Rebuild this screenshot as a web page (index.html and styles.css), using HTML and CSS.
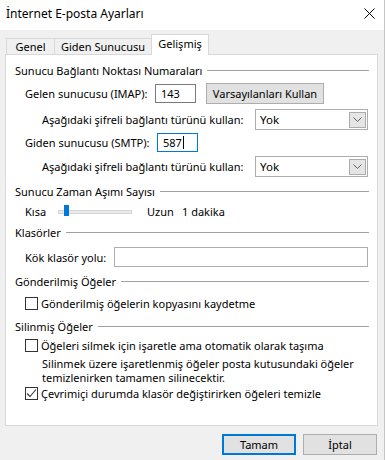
FILE: index.html
```html
<!DOCTYPE html>
<html lang="tr">
<head>
<meta charset="utf-8">
<title>İnternet E-posta Ayarları</title>
<link rel="stylesheet" href="styles.css">
</head>
<body>
<div class="window">
  <div class="titlebar">
    <span class="title">İnternet E-posta Ayarları</span>
    <svg class="close" width="11" height="11" viewBox="0 0 11 11"><path d="M0.5 0.5 L10.5 10.5 M10.5 0.5 L0.5 10.5" stroke="#000" stroke-width="1" fill="none"/></svg>
  </div>
  <div class="tabs">
    <div class="tab t-genel">Genel</div>
    <div class="tab t-giden">Giden Sunucusu</div>
    <div class="tab t-active">Gelişmiş</div>
  </div>
  <div class="panel">
    <div class="group-h g1"><span>Sunucu Bağlantı Noktası Numaraları</span><i class="rule"></i></div>
    <div class="row r-imap">
      <span class="lbl lbl-port">Gelen sunucusu (IMAP):</span>
      <div class="field num dark">143</div>
      <div class="btn btn-default">Varsayılanları Kullan</div>
    </div>
    <div class="row r-sel1">
      <span class="lbl lbl-enc">Aşağıdaki şifreli bağlantı türünü kullan:</span>
      <div class="select"><span>Yok</span><span class="arrow"><svg width="9" height="5" viewBox="0 0 9 5"><path d="M0.5 0.5 L4.5 4.5 L8.5 0.5" stroke="#606060" stroke-width="1" fill="none"/></svg></span></div>
    </div>
    <div class="row r-smtp">
      <span class="lbl lbl-port2">Giden sunucusu (SMTP):</span>
      <div class="field num focus">587<i class="caret"></i></div>
    </div>
    <div class="row r-sel2">
      <span class="lbl lbl-enc">Aşağıdaki şifreli bağlantı türünü kullan:</span>
      <div class="select"><span>Yok</span><span class="arrow"><svg width="9" height="5" viewBox="0 0 9 5"><path d="M0.5 0.5 L4.5 4.5 L8.5 0.5" stroke="#606060" stroke-width="1" fill="none"/></svg></span></div>
    </div>
    <div class="group-h g2"><span>Sunucu Zaman Aşımı Sayısı</span><i class="rule"></i></div>
    <div class="row r-slider">
      <span class="lbl lbl-kisa">Kısa</span>
      <div class="slider"><i class="track"></i><i class="thumb"></i></div>
      <span class="lbl lbl-uzun">Uzun</span>
      <span class="lbl">1 dakika</span>
    </div>
    <div class="group-h g3"><span>Klasörler</span><i class="rule"></i></div>
    <div class="row r-kok">
      <span class="lbl lbl-kok">Kök klasör yolu:</span>
      <div class="field path"></div>
    </div>
    <div class="group-h g4"><span>Gönderilmiş Öğeler</span><i class="rule"></i></div>
    <div class="row check r-cb1"><i class="box"></i><span>Gönderilmiş öğelerin kopyasını kaydetme</span></div>
    <div class="group-h g5"><span>Silinmiş Öğeler</span><i class="rule"></i></div>
    <div class="row check r-cb2"><i class="box"></i><span>Öğeleri silmek için işaretle ama otomatik olarak taşıma</span></div>
    <p class="desc">Silinmek üzere işaretlenmiş öğeler posta kutusundaki öğeler<br>temizlenirken tamamen silinecektir.</p>
    <div class="row check r-cb3"><i class="box"><svg width="11" height="11" viewBox="0 0 11 11"><path d="M1 5.5 L4 8.5 L10 1.5" stroke="#333" stroke-width="1.1" fill="none"/></svg></i><span>Çevrimiçi durumda klasör değiştirirken öğeleri temizle</span></div>
  </div>
  <div class="buttons">
    <div class="btn dlg primary">Tamam</div>
    <div class="btn dlg">İptal</div>
  </div>
</div>
</body>
</html>
```

FILE: styles.css
```css
* { box-sizing: border-box; }
html, body { margin: 0; padding: 0; }
body {
  width: 386px;
  height: 460px;
  overflow: hidden;
  background: #ffffff;
  font-family: "Noto Sans", "Open Sans", sans-serif;
  font-size: 11px;
  color: #000;
}
.window {
  width: 385px;
  height: 460px;
  background: #f0f0f0;
  border-right: 1px solid #c4c4c4;
  display: flex;
  flex-direction: column;
}
.titlebar {
  height: 30px;
  flex: none;
  background: #fff;
  display: flex;
  align-items: center;
  justify-content: space-between;
  padding: 0 9px 3px 6px;
  font-size: 12px;
}
.close { display: block; }
.tabs {
  margin-top: 4px;
  height: 20px;
  flex: none;
  display: flex;
  align-items: flex-end;
  padding-left: 6px;
}
.tab {
  height: 16px;
  border: 1px solid #d9d9d9;
  border-bottom: none;
  border-right: none;
  display: flex;
  align-items: center;
  justify-content: center;
  background: #f0f0f0;
  padding-top: 0;
}
.t-genel { width: 48px; }
.t-giden { width: 97px; }
.t-active {
  width: 58px;
  height: 21px;
  margin-bottom: -1px;
  border-right: 1px solid #d9d9d9;
  background: #fff;
  position: relative;
  z-index: 1;
  padding-bottom: 4px;
}
.panel {
  margin-left: 5px;
  width: 373px;
  height: 372px;
  flex: none;
  background: #fff;
  border: 1px solid #d9d9d9;
  padding: 7px 8px 0 9px;
}
.group-h {
  height: 16px;
  display: flex;
  align-items: center;
}
.rule {
  flex: 1;
  height: 1px;
  background: #a0a0a0;
  margin-left: 5px;
}
.row {
  display: flex;
  align-items: center;
  padding-left: 10px;
}
.lbl { white-space: nowrap; }
.lbl-port { width: 130px; }
.lbl-port2 { width: 132px; }
.lbl-enc { width: 230px; padding-left: 17px; }
.lbl-kok { width: 89px; }
.field {
  height: 19px;
  border: 1px solid #7a7a7a;
  background: #fff;
  display: flex;
  align-items: center;
  padding-left: 5px;
}
.field.num { width: 41px; }
.field.focus { border-color: #0078d7; }
.caret {
  width: 1px;
  height: 13px;
  background: #000;
  margin-left: 1px;
}
.field.path { width: 254px; height: 20px; border-color: #adadad; }
.btn {
  background: #e1e1e1;
  border: 1px solid #adadad;
  display: flex;
  align-items: center;
  justify-content: center;
}
.btn-default {
  width: 118px;
  height: 21px;
  margin-left: 10px;
}
.select {
  width: 113px;
  height: 21px;
  border: 1px solid #adadad;
  background: #fff;
  display: flex;
  align-items: center;
  justify-content: space-between;
  padding: 2px 1px 2px 4px;
}
.select span:first-child { font-size: 11.5px; }
.arrow {
  width: 17px;
  height: 16px;
  background: #e5e5e5;
  border: 1px solid #acacac;
  display: flex;
  align-items: center;
  justify-content: center;
}
.arrow svg { display: block; }
.r-imap { margin-top: 5px; height: 21px; }
.r-sel1 { margin-top: 5px; height: 21px; }
.r-smtp { margin-top: 3px; height: 19px; }
.r-sel2 { margin-top: 4px; height: 21px; }
.g2 { margin-top: 6px; }
.r-slider { margin-top: 4px; height: 16px; }
.g3 { margin-top: 5px; }
.r-kok { margin-top: 7px; height: 20px; }
.g4 { margin-top: 6px; }
.r-cb1 { margin-top: 6px; height: 16px; }
.g5 { margin-top: 7px; }
.r-cb2 { margin-top: 3px; height: 16px; }
.r-cb3 { height: 16px; }
.lbl-kisa { width: 33px; }
.slider {
  width: 74px;
  height: 12px;
  position: relative;
  margin-right: 15px;
}
.track {
  position: absolute;
  left: 0;
  right: 0;
  top: 5px;
  height: 4px;
  background: #e7eaea;
  border: 1px solid #d6d6d6;
}
.thumb {
  position: absolute;
  left: 6px;
  top: 0;
  width: 5px;
  height: 11px;
  background: #0078d7;
}
.lbl-uzun { width: 35px; }
.check { gap: 3px; }
.box {
  width: 13px;
  height: 13px;
  border: 1px solid #333;
  background: #fff;
  flex: none;
  display: flex;
  align-items: center;
  justify-content: center;
}
.box svg { display: block; }
.desc {
  margin: 4px 0 0 27px;
  line-height: 14px;
}
.buttons {
  margin-top: 8px;
  display: flex;
  justify-content: flex-end;
  gap: 7px;
  padding-right: 7px;
}
.dlg {
  width: 74px;
  height: 21px;
}
.dlg.primary {
  border: 2px solid #0078d7;
}
```
